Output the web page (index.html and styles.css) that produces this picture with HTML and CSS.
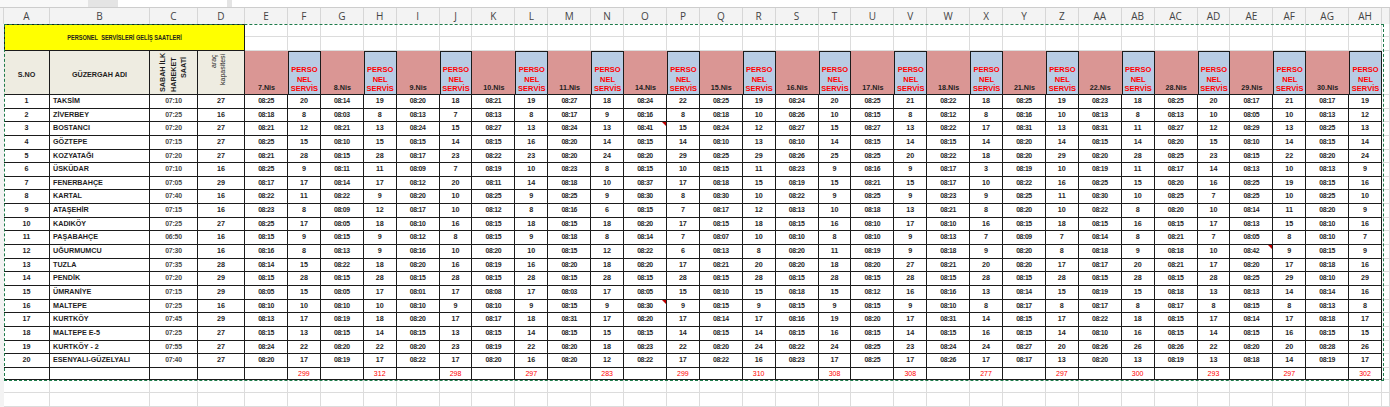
FILE: index.html
```html
<!DOCTYPE html>
<html lang="tr">
<head>
<meta charset="utf-8">
<title>Personel Servisleri Geliş Saatleri</title>
<link rel="stylesheet" href="styles.css">
</head>
<body>
<div class="top"><div class="bx b1"></div><div class="bx b2"></div><div class="bx b3"></div></div>
<div class="sheet">
<div class="r ch"><div></div><div>A</div><div>B</div><div>C</div><div>D</div><div>E</div><div>F</div><div>G</div><div>H</div><div>I</div><div>J</div><div>K</div><div>L</div><div>M</div><div>N</div><div>O</div><div>P</div><div>Q</div><div>R</div><div>S</div><div>T</div><div>U</div><div>V</div><div>W</div><div>X</div><div>Y</div><div>Z</div><div>AA</div><div>AB</div><div>AC</div><div>AD</div><div>AE</div><div>AF</div><div>AG</div><div>AH</div><div></div></div>
<div class="r ttl"><div class="rh"></div><div class="yel"><span>PERSONEL&nbsp; SERVİSLERİ GELİŞ SAATLERİ</span></div>
<div></div><div></div><div></div><div></div><div></div><div></div><div></div><div></div><div></div><div></div><div></div><div></div><div></div><div></div><div></div><div></div><div></div><div></div><div></div><div></div><div></div><div></div><div></div><div></div><div></div><div></div><div></div><div></div><div></div><div></div><div></div>
<div></div><div></div><div></div><div></div><div></div><div></div><div></div><div></div><div></div><div></div><div></div><div></div><div></div><div></div><div></div><div></div><div></div><div></div><div></div><div></div><div></div><div></div><div></div><div></div><div></div><div></div><div></div><div></div><div></div><div></div><div></div>
</div>
<div class="r hd"><div></div><div class="hb">S.NO</div><div class="hb">GÜZERGAH ADI</div><div class="hb c"><div class="rot">SABAH İLK<br>HAREKET<br>SAATİ</div></div><div class="hb dd"><div class="rot rn">araç<br>kapasitesi</div></div>
<div class="sal">7.Nis</div><div class="blu">PERSO<br>NEL<br>SERVİS</div>
<div class="sal">8.Nis</div><div class="blu">PERSO<br>NEL<br>SERVİS</div>
<div class="sal">9.Nis</div><div class="blu">PERSO<br>NEL<br>SERVİS</div>
<div class="sal">10.Nis</div><div class="blu">PERSO<br>NEL<br>SERVİS</div>
<div class="sal">11.Nis</div><div class="blu">PERSO<br>NEL<br>SERVİS</div>
<div class="sal">14.Nis</div><div class="blu">PERSO<br>NEL<br>SERVİS</div>
<div class="sal">15.Nis</div><div class="blu">PERSO<br>NEL<br>SERVİS</div>
<div class="sal">16.Nis</div><div class="blu">PERSO<br>NEL<br>SERVİS</div>
<div class="sal">17.Nis</div><div class="blu">PERSO<br>NEL<br>SERVİS</div>
<div class="sal">18.Nis</div><div class="blu">PERSO<br>NEL<br>SERVİS</div>
<div class="sal">21.Nis</div><div class="blu">PERSO<br>NEL<br>SERVİS</div>
<div class="sal">22.Nis</div><div class="blu">PERSO<br>NEL<br>SERVİS</div>
<div class="sal">28.Nis</div><div class="blu">PERSO<br>NEL<br>SERVİS</div>
<div class="sal">29.Nis</div><div class="blu">PERSO<br>NEL<br>SERVİS</div>
<div class="sal">30.Nis</div><div class="blu">PERSO<br>NEL<br>SERVİS</div>
<div class="fl"></div></div>
<div class="r d"><div></div><div>1</div><div>TAKSİM</div><div>07:10</div><div>27</div><div>08:25</div><div>20</div><div>08:14</div><div>19</div><div>08:20</div><div>18</div><div>08:21</div><div>19</div><div>08:27</div><div>18</div><div>08:24</div><div>22</div><div>08:25</div><div>19</div><div>08:24</div><div>20</div><div>08:25</div><div>21</div><div>08:22</div><div>18</div><div>08:25</div><div>19</div><div>08:23</div><div>18</div><div>08:25</div><div>20</div><div>08:17</div><div>21</div><div>08:17</div><div>19</div><div></div></div>
<div class="r d"><div></div><div>2</div><div>ZİVERBEY</div><div>07:25</div><div>16</div><div>08:18</div><div>8</div><div>08:03</div><div>8</div><div>08:13</div><div>7</div><div>08:13</div><div>8</div><div>08:17</div><div>9</div><div>08:16</div><div>8</div><div>08:18</div><div>10</div><div>08:26</div><div>10</div><div>08:15</div><div>8</div><div>08:12</div><div>8</div><div>08:16</div><div>10</div><div>08:13</div><div>8</div><div>08:13</div><div>10</div><div>08:05</div><div>10</div><div>08:13</div><div>12</div><div></div></div>
<div class="r d"><div></div><div>3</div><div>BOSTANCI</div><div>07:20</div><div>27</div><div>08:21</div><div>12</div><div>08:21</div><div>13</div><div>08:24</div><div>15</div><div>08:27</div><div>13</div><div>08:24</div><div>13</div><div class="cm">08:41</div><div>15</div><div>08:24</div><div>12</div><div>08:27</div><div>15</div><div>08:27</div><div>13</div><div>08:22</div><div>17</div><div>08:31</div><div>13</div><div>08:31</div><div>11</div><div>08:27</div><div>12</div><div>08:29</div><div>13</div><div>08:25</div><div>13</div><div></div></div>
<div class="r d"><div></div><div>4</div><div>GÖZTEPE</div><div>07:15</div><div>27</div><div>08:25</div><div>15</div><div>08:10</div><div>15</div><div>08:15</div><div>14</div><div>08:15</div><div>16</div><div>08:20</div><div>14</div><div>08:15</div><div>14</div><div>08:10</div><div>13</div><div>08:10</div><div>14</div><div>08:15</div><div>14</div><div>08:15</div><div>14</div><div>08:20</div><div>14</div><div>08:15</div><div>14</div><div>08:20</div><div>15</div><div>08:10</div><div>14</div><div>08:15</div><div>14</div><div></div></div>
<div class="r d"><div></div><div>5</div><div>KOZYATAĞI</div><div>07:20</div><div>27</div><div>08:21</div><div>28</div><div>08:15</div><div>28</div><div>08:17</div><div>23</div><div>08:22</div><div>23</div><div>08:20</div><div>24</div><div>08:20</div><div>29</div><div>08:25</div><div>29</div><div>08:26</div><div>25</div><div>08:25</div><div>20</div><div>08:22</div><div>18</div><div>08:20</div><div>29</div><div>08:20</div><div>28</div><div>08:25</div><div>23</div><div>08:15</div><div>22</div><div>08:20</div><div>24</div><div></div></div>
<div class="r d"><div></div><div>6</div><div>ÜSKÜDAR</div><div>07:10</div><div>16</div><div>08:25</div><div>9</div><div>08:11</div><div>11</div><div>08:09</div><div>7</div><div>08:19</div><div>10</div><div>08:23</div><div>8</div><div>08:15</div><div>10</div><div>08:15</div><div>11</div><div>08:23</div><div>9</div><div>08:16</div><div>9</div><div>08:17</div><div>3</div><div>08:19</div><div>10</div><div>08:19</div><div>11</div><div>08:17</div><div>14</div><div>08:13</div><div>10</div><div>08:13</div><div>9</div><div></div></div>
<div class="r d"><div></div><div>7</div><div>FENERBAHÇE</div><div>07:05</div><div>29</div><div>08:17</div><div>17</div><div>08:14</div><div>17</div><div>08:12</div><div>20</div><div>08:11</div><div>14</div><div>08:18</div><div>10</div><div>08:37</div><div>17</div><div>08:18</div><div>15</div><div>08:19</div><div>15</div><div>08:21</div><div>15</div><div>08:17</div><div>10</div><div>08:22</div><div>16</div><div>08:25</div><div>15</div><div>08:20</div><div>16</div><div>08:25</div><div>19</div><div>08:15</div><div>16</div><div></div></div>
<div class="r d"><div></div><div>8</div><div>KARTAL</div><div>07:40</div><div>16</div><div>08:22</div><div>11</div><div>08:22</div><div>9</div><div>08:20</div><div>10</div><div>08:25</div><div>9</div><div>08:25</div><div>9</div><div>08:30</div><div>8</div><div>08:30</div><div>10</div><div>08:22</div><div>9</div><div>08:25</div><div>9</div><div>08:23</div><div>9</div><div>08:25</div><div>11</div><div>08:30</div><div>10</div><div>08:25</div><div>7</div><div>08:25</div><div>10</div><div>08:25</div><div>10</div><div></div></div>
<div class="r d"><div></div><div>9</div><div>ATAŞEHİR</div><div>07:15</div><div>16</div><div>08:23</div><div>8</div><div>08:09</div><div>12</div><div>08:17</div><div>10</div><div>08:12</div><div>8</div><div>08:16</div><div>6</div><div>08:15</div><div>7</div><div>08:17</div><div>12</div><div>08:13</div><div>10</div><div>08:18</div><div>13</div><div>08:21</div><div>8</div><div>08:20</div><div>10</div><div>08:22</div><div>8</div><div>08:20</div><div>10</div><div>08:14</div><div>11</div><div>08:20</div><div>9</div><div></div></div>
<div class="r d"><div></div><div>10</div><div>KADIKÖY</div><div>07:25</div><div>27</div><div>08:25</div><div>17</div><div>08:05</div><div>18</div><div>08:10</div><div>16</div><div>08:15</div><div>18</div><div>08:15</div><div>18</div><div>08:20</div><div>17</div><div>08:15</div><div>18</div><div>08:15</div><div>16</div><div>08:10</div><div>17</div><div>08:10</div><div>16</div><div>08:15</div><div>18</div><div>08:15</div><div>16</div><div>08:15</div><div>17</div><div>08:13</div><div>15</div><div>08:10</div><div>16</div><div></div></div>
<div class="r d"><div></div><div>11</div><div>PAŞABAHÇE</div><div>06:50</div><div>16</div><div>08:15</div><div>9</div><div>08:15</div><div>9</div><div>08:12</div><div>8</div><div>08:15</div><div>9</div><div>08:18</div><div>8</div><div>08:14</div><div>7</div><div>08:07</div><div>10</div><div>08:10</div><div>8</div><div>08:10</div><div>9</div><div>08:13</div><div>7</div><div>08:09</div><div>7</div><div>08:14</div><div>8</div><div>08:21</div><div>7</div><div>08:05</div><div>8</div><div>08:10</div><div>7</div><div></div></div>
<div class="r d"><div></div><div>12</div><div>UĞURMUMCU</div><div>07:30</div><div>16</div><div>08:16</div><div>8</div><div>08:13</div><div>9</div><div>08:16</div><div>10</div><div>08:20</div><div>10</div><div>08:15</div><div>12</div><div>08:22</div><div>6</div><div>08:13</div><div>8</div><div>08:20</div><div>11</div><div>08:19</div><div>9</div><div>08:18</div><div>9</div><div>08:20</div><div>8</div><div>08:18</div><div>9</div><div>08:18</div><div>10</div><div class="cm">08:42</div><div>9</div><div>08:15</div><div>9</div><div></div></div>
<div class="r d"><div></div><div>13</div><div>TUZLA</div><div>07:35</div><div>28</div><div>08:14</div><div>15</div><div>08:22</div><div>18</div><div>08:20</div><div>16</div><div>08:19</div><div>16</div><div>08:20</div><div>18</div><div>08:20</div><div>17</div><div>08:21</div><div>20</div><div>08:20</div><div>18</div><div>08:20</div><div>27</div><div>08:21</div><div>20</div><div>08:20</div><div>17</div><div>08:17</div><div>20</div><div>08:21</div><div>17</div><div>08:20</div><div>17</div><div>08:18</div><div>16</div><div></div></div>
<div class="r d"><div></div><div>14</div><div>PENDİK</div><div>07:20</div><div>29</div><div>08:15</div><div>28</div><div>08:15</div><div>28</div><div>08:15</div><div>28</div><div>08:15</div><div>28</div><div>08:15</div><div>28</div><div>08:15</div><div>28</div><div>08:15</div><div>28</div><div>08:15</div><div>28</div><div>08:15</div><div>28</div><div>08:15</div><div>28</div><div>08:15</div><div>28</div><div>08:15</div><div>28</div><div>08:15</div><div>28</div><div>08:25</div><div>29</div><div>08:10</div><div>29</div><div></div></div>
<div class="r d"><div></div><div>15</div><div>ÜMRANİYE</div><div>07:15</div><div>29</div><div>08:05</div><div>15</div><div>08:05</div><div>17</div><div>08:01</div><div>17</div><div>08:08</div><div>17</div><div>08:03</div><div>17</div><div>08:05</div><div>15</div><div>08:10</div><div>15</div><div>08:18</div><div>15</div><div>08:12</div><div>16</div><div>08:16</div><div>13</div><div>08:14</div><div>15</div><div>08:19</div><div>15</div><div>08:18</div><div>13</div><div>08:13</div><div>14</div><div>08:14</div><div>16</div><div></div></div>
<div class="r d"><div></div><div>16</div><div>MALTEPE</div><div>07:25</div><div>16</div><div>08:10</div><div>10</div><div>08:10</div><div>10</div><div>08:10</div><div>9</div><div>08:10</div><div>9</div><div>08:15</div><div>9</div><div class="cm">08:30</div><div>9</div><div>08:15</div><div>9</div><div>08:15</div><div>9</div><div>08:15</div><div>9</div><div>08:10</div><div>8</div><div>08:17</div><div>8</div><div>08:17</div><div>8</div><div>08:17</div><div>8</div><div>08:15</div><div>8</div><div>08:13</div><div>8</div><div></div></div>
<div class="r d"><div></div><div>17</div><div>KURTKÖY</div><div>07:45</div><div>29</div><div>08:13</div><div>17</div><div>08:19</div><div>18</div><div>08:20</div><div>17</div><div>08:17</div><div>18</div><div>08:31</div><div>17</div><div>08:20</div><div>17</div><div>08:14</div><div>17</div><div>08:16</div><div>19</div><div>08:20</div><div>17</div><div>08:31</div><div>14</div><div>08:15</div><div>17</div><div>08:22</div><div>18</div><div>08:15</div><div>17</div><div>08:14</div><div>17</div><div>08:18</div><div>17</div><div></div></div>
<div class="r d"><div></div><div>18</div><div>MALTEPE E-5</div><div>07:25</div><div>27</div><div>08:15</div><div>13</div><div>08:15</div><div>14</div><div>08:15</div><div>13</div><div>08:15</div><div>14</div><div>08:15</div><div>15</div><div>08:15</div><div>14</div><div>08:15</div><div>14</div><div>08:15</div><div>16</div><div>08:15</div><div>14</div><div>08:15</div><div>16</div><div>08:15</div><div>14</div><div>08:10</div><div>16</div><div>08:15</div><div>14</div><div>08:15</div><div>16</div><div>08:15</div><div>15</div><div></div></div>
<div class="r d"><div></div><div>19</div><div>KURTKÖY - 2</div><div>07:55</div><div>27</div><div>08:24</div><div>22</div><div>08:20</div><div>22</div><div>08:20</div><div>23</div><div>08:19</div><div>22</div><div>08:20</div><div>18</div><div>08:23</div><div>22</div><div>08:20</div><div>24</div><div>08:22</div><div>24</div><div>08:25</div><div>23</div><div>08:24</div><div>24</div><div>08:27</div><div>20</div><div>08:26</div><div>26</div><div>08:26</div><div>22</div><div>08:20</div><div>20</div><div>08:28</div><div>26</div><div></div></div>
<div class="r d"><div></div><div>20</div><div>ESENYALI-GÜZELYALI</div><div>07:40</div><div>27</div><div>08:20</div><div>17</div><div>08:19</div><div>17</div><div>08:22</div><div>17</div><div>08:20</div><div>16</div><div>08:20</div><div>12</div><div>08:22</div><div>17</div><div>08:22</div><div>16</div><div>08:23</div><div>17</div><div>08:25</div><div>17</div><div>08:26</div><div>17</div><div>08:17</div><div>13</div><div>08:20</div><div>13</div><div>08:19</div><div>13</div><div>08:18</div><div>14</div><div>08:19</div><div>17</div><div></div></div>
<div class="r tot"><div></div><div></div><div></div><div></div><div></div><div></div><div>299</div><div></div><div>312</div><div></div><div>298</div><div></div><div>297</div><div></div><div>283</div><div></div><div>299</div><div></div><div>310</div><div></div><div>308</div><div></div><div>308</div><div></div><div>277</div><div></div><div>297</div><div></div><div>300</div><div></div><div>293</div><div></div><div>297</div><div></div><div>302</div><div></div></div>
<div class="r e"><div></div><div></div><div></div><div></div><div></div><div></div><div></div><div></div><div></div><div></div><div></div><div></div><div></div><div></div><div></div><div></div><div></div><div></div><div></div><div></div><div></div><div></div><div></div><div></div><div></div><div></div><div></div><div></div><div></div><div></div><div></div><div></div><div></div><div></div><div></div><div></div></div>
<div class="r e"><div></div><div></div><div></div><div></div><div></div><div></div><div></div><div></div><div></div><div></div><div></div><div></div><div></div><div></div><div></div><div></div><div></div><div></div><div></div><div></div><div></div><div></div><div></div><div></div><div></div><div></div><div></div><div></div><div></div><div></div><div></div><div></div><div></div><div></div><div></div><div></div></div>
<div class="sel"></div>
</div>
</body>
</html>
```
FILE: styles.css
```css
* { box-sizing: border-box; margin: 0; padding: 0; }
html, body { width: 1390px; height: 407px; overflow: hidden; background: #fff; }
body { font-family: "Liberation Sans", Arial, sans-serif; color: #222; }

.top { height: 8px; display: flex; background: #e4e4e4; border-bottom: 1px solid #cdcdcd; }
.top .bx { background: #f8f8f8; }
.top .b1 { width: 88px; }
.top .b2 { width: 109px; margin-left: 30px; background: #fff; }
.top .b3 { flex: 1; margin-left: 5px; background: #fff; }

.sheet { position: relative; }
.r {
  display: grid;
  grid-template-columns: 4px 46px 100px 48px 47px repeat(15, 43px 32.8px) 1fr;
}

/* column letters */
.ch { height: 16px; background: #f3f3f3; }
.ch > div {
  border-right: 1px solid #d6d6d6;
  font-family: "Open Sans", "Liberation Sans", sans-serif;
  font-size: 10px; color: #444; text-align: center; line-height: 16px;
}

/* title rows */
.ttl { grid-template-rows: 13px 14px; }
.ttl > div { border-right: 1px solid #dcdcdc; border-bottom: 1px solid #dcdcdc; }
.ttl > .rh { grid-row: span 2; background: #f3f3f3; border: 0; }
.ttl > .yel {
  grid-column: span 4; grid-row: span 2;
  background: #ffff00; border: 1px solid #1b1b1b;
  display: flex; align-items: center; justify-content: center;
}
.yel span {
  display: inline-block; white-space: nowrap;
  font-weight: bold; font-size: 7.2px; color: #1e1e1e;
  transform: scaleX(0.78);
}

/* header row */
.hd { height: 44px; }
.hd > div:first-child { background: #f3f3f3; }
.hb {
  background: #eeece1; border-right: 1px solid #1b1b1b; border-bottom: 1px solid #1b1b1b;
  display: flex; align-items: center; justify-content: center;
  font-weight: bold; font-size: 7.2px; padding-top: 4px; overflow: hidden; color: #1e1e1e;
}
.hb.c { align-items: flex-end; padding: 0 0 2px; }
.hb.dd { align-items: flex-start; padding: 3px 6px 0 0; }
.rot {
  writing-mode: vertical-rl; transform: rotate(180deg);
  text-align: end; white-space: nowrap;
  font-weight: bold; font-size: 7.2px; line-height: 10.5px; height: 35px;
}
.rot.rn { font-weight: normal; font-size: 7px; line-height: 9px; height: 33px; color: #222; }
.sal {
  background: #da9694; border-bottom: 1px solid #1b1b1b;
  display: flex; align-items: flex-end; justify-content: center;
  font-weight: bold; font-size: 7.2px; line-height: 8px; padding-bottom: 2px; color: #1e1e1e;
}
.blu {
  background: #b8cce4; border: 1px solid #1b1b1b;
  display: flex; align-items: flex-end; justify-content: center; text-align: center;
  color: #ff0000; font-weight: bold; font-size: 7.5px; line-height: 9.6px;
}
.fl { border-right: 1px solid #dcdcdc; border-bottom: 1px solid #dcdcdc; }

/* data rows */
.d { height: 13.65px; }
.d > div {
  border-right: 1px solid #1b1b1b; border-bottom: 1px solid #1b1b1b;
  text-align: center; font-weight: bold; font-size: 7.2px; line-height: 12.6px;
  white-space: nowrap; overflow: hidden; color: #1e1e1e;
}
.d > div:nth-child(2n+6) { font-size: 6.9px; letter-spacing: -0.4px; color: #262626; }
.d > div:nth-child(3) { text-align: left; padding-left: 3px; }
.d > div:nth-child(4) { color: #4a4a4a; font-size: 6.9px; letter-spacing: -0.2px; }
.d > div:first-child { border: 0; background: #f3f3f3; }
.d > div:last-child { border-right: 1px solid #dcdcdc; border-bottom: 1px solid #dcdcdc; }
.cm { position: relative; }
.cm::after {
  content: ""; position: absolute; top: 0; right: 0; width: 0; height: 0;
  border-top: 4px solid #c00000; border-left: 4px solid transparent;
}

/* totals */
.tot { height: 12px; }
.tot > div {
  border-right: 1px solid #1b1b1b; border-bottom: 1px solid #1b1b1b;
  text-align: center; color: #ff0000; font-size: 7px; line-height: 11px;
}
.tot > div:first-child { border: 0; background: #f3f3f3; }
.tot > div:last-child { border-right: 1px solid #dcdcdc; border-bottom: 1px solid #dcdcdc; }

/* empty rows */
.e { height: 13.5px; }
.e > div { border-right: 1px solid #dcdcdc; border-bottom: 1px solid #dcdcdc; }
.e > div:first-child { border: 0; background: #f3f3f3; }

/* copy marquee */
.sel {
  position: absolute; left: 4px; top: 16px; width: 1380px; height: 357px;
  border: 1px dashed #1e7b4b; pointer-events: none;
}
```
